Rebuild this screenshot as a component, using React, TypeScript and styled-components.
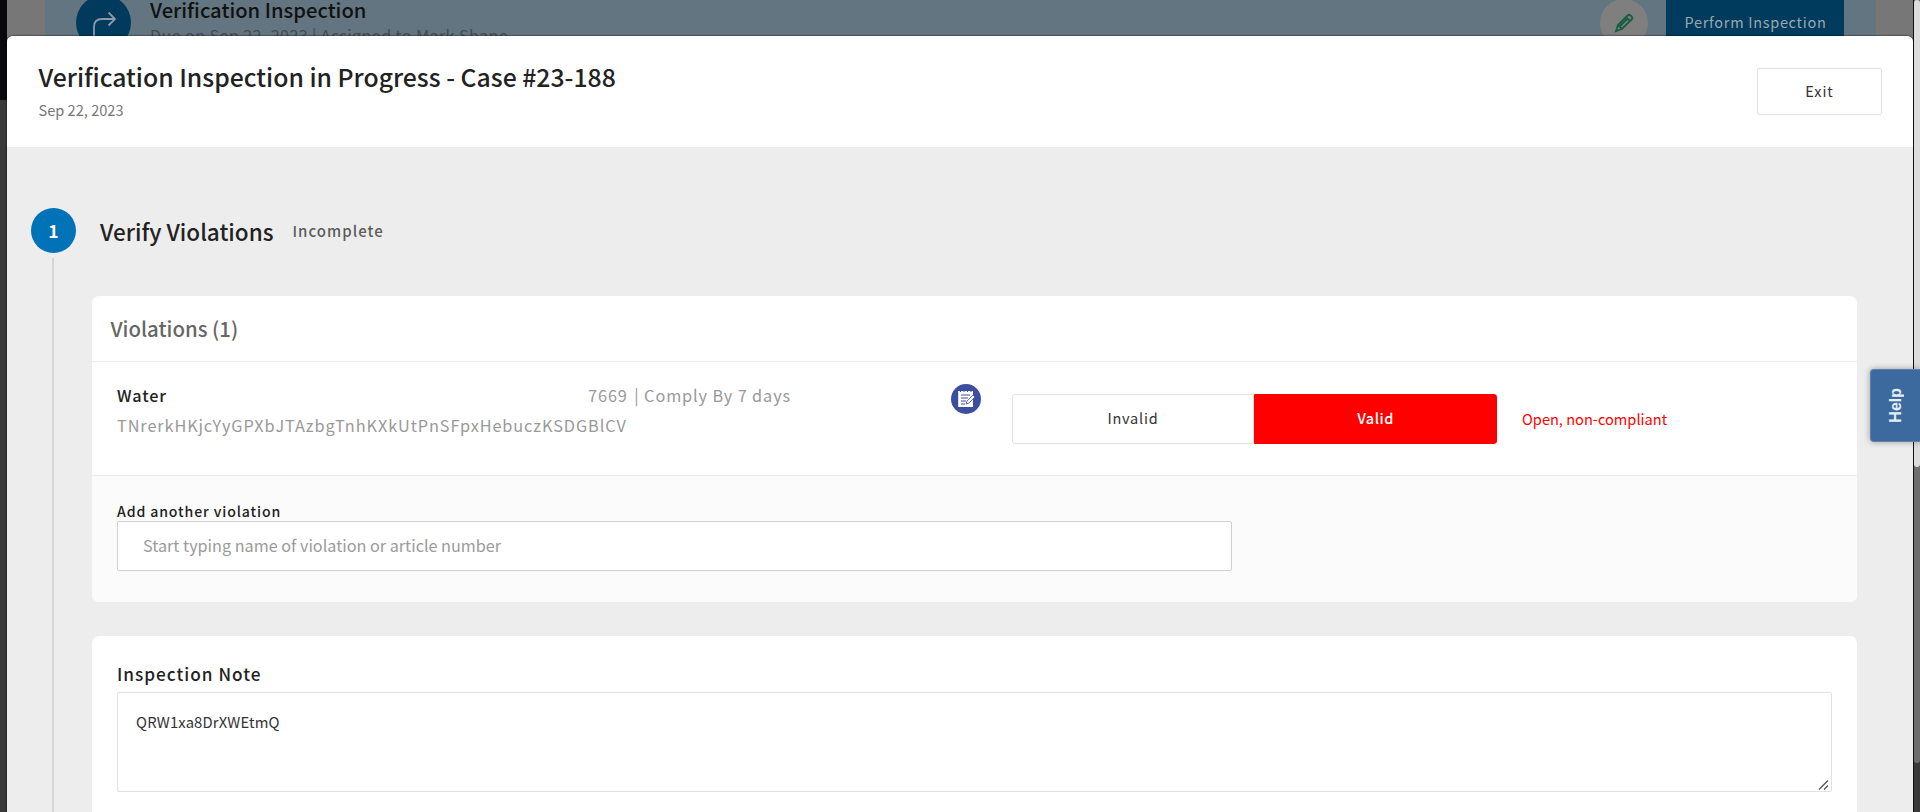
import React from "react";
import styled, { createGlobalStyle } from "styled-components";

const Global = createGlobalStyle`
  *, *::before, *::after { box-sizing: border-box; }
  html, body { margin: 0; background: #3a3a3a; overflow: hidden; }
  body { font-family: "Noto Sans CJK SC", sans-serif; color: #222; }
`;

const Screen = styled.div`
  position: relative;
  width: 1920px;
  height: 812px;
  overflow: hidden;
  background: #3a3a3a;
`;

const Backdrop = styled.div`
  display: flex;
  height: 100px;
  padding-left: 7px;
  background: #09090b;
`;

const Gutter = styled.div<{ $width: number }>`
  width: ${(p) => p.$width}px;
  background: #777;
`;

const Banner = styled.div`
  display: flex;
  align-items: flex-start;
  width: 1831px;
  padding: 0 32px 0 31px;
  background: #627581;
`;

const RouteBadge = styled.div`
  display: flex;
  align-items: center;
  justify-content: center;
  width: 55px;
  height: 55px;
  margin-top: -5px;
  border-radius: 50%;
  background: #003a5c;
`;

const BannerText = styled.div`
  flex: 1;
  margin-top: -2px;
  padding-left: 19px;
`;

const Line = styled.div<{
  $size: number;
  $height: number;
  $weight?: number;
  $color?: string;
  $spacing?: number;
}>`
  font-size: ${(p) => p.$size}px;
  line-height: ${(p) => p.$height}px;
  font-weight: ${(p) => p.$weight ?? 400};
  color: ${(p) => p.$color ?? "#222"};
  letter-spacing: ${(p) => p.$spacing ?? 0}px;
  white-space: nowrap;
`;

const EditBadge = styled.div`
  display: flex;
  align-items: center;
  justify-content: center;
  width: 48px;
  height: 48px;
  margin: -1px 18px 0 0;
  border-radius: 50%;
  background: #7f7f7f;
`;

const PerformButton = styled.div`
  width: 178px;
  height: 60px;
  padding-left: 1px;
  background: #003a5c;
  text-align: center;
`;

const Modal = styled.div`
  position: absolute;
  top: 36px;
  left: 7px;
  width: 1906px;
  height: 800px;
  border-radius: 6px 6px 0 0;
  background: #ededed;
  box-shadow: 0 0 2px #000;
  overflow: hidden;
`;

const ModalHeader = styled.header`
  display: flex;
  justify-content: space-between;
  height: 111px;
  padding: 25px 31px 0 31.5px;
  background: #fff;
`;

const ModalTitle = styled.div`
  margin-top: -2px;
`;

const ExitButton = styled.button`
  width: 125px;
  height: 47px;
  margin-top: 7px;
  padding: 0 0 2px;
  border: 1px solid #e2e2e2;
  border-radius: 2px;
  background: #fff;
  font: 400 14.5px "Noto Sans CJK SC", sans-serif;
  letter-spacing: 0.9px;
  color: #333;
`;

const Step = styled.section`
  display: grid;
  grid-template-columns: 85px 1765px;
  padding-top: 61px;
`;

const Rail = styled.div`
  display: flex;
  flex-direction: column;
  align-items: center;
  width: 45px;
  margin-left: 24px;
`;

const StepNumber = styled.div`
  width: 45px;
  height: 45px;
  border-radius: 50%;
  background: #0072b8;
  color: #fff;
  font-size: 17.5px;
  font-weight: 700;
  line-height: 46px;
  text-align: center;
`;

const RailLine = styled.div`
  width: 2px;
  height: 600px;
  margin: 5px 1px 0 0;
  background: #d5d5d5;
`;

const StepTitle = styled.div`
  display: flex;
  align-items: center;
  gap: 19px;
  height: 47px;
  padding: 0 0 1px 8px;
`;

const Card = styled.div`
  border-radius: 7px;
  background: #fff;
  overflow: hidden;
`;

const ViolationsCard = styled(Card)`
  margin-top: 41px;
  height: 306px;
`;

const CardHeading = styled.div`
  height: 66px;
  padding: 15px 18.5px;
  border-bottom: 1px solid #ededed;
`;

const ViolationRow = styled.div`
  display: flex;
  height: 114px;
  padding-left: 25px;
  border-bottom: 1px solid #ededed;
`;

const Summary = styled.div`
  width: 834px;
  padding-top: 18px;
`;

const SummaryTop = styled.div`
  display: flex;
  justify-content: space-between;
  width: 674px;
`;

const Code = styled.span`
  margin-right: 2px;
`;

const NoteIcon = styled.svg`
  width: 30px;
  height: 30px;
  margin-top: 22px;
  flex: none;
`;

const Toggle = styled.div`
  display: flex;
  margin: 32px 25px 0 31px;
`;

const ToggleButton = styled.button<{ $active?: boolean }>`
  width: ${(p) => (p.$active ? 243 : 242)}px;
  height: 50px;
  padding: 0 0 3px;
  border: 1px solid ${(p) => (p.$active ? "#f00" : "#e0e3e3")};
  border-radius: ${(p) => (p.$active ? "0 3px 3px 0" : "3px 0 0 3px")};
  background: ${(p) => (p.$active ? "#f00" : "#fff")};
  color: ${(p) => (p.$active ? "#fff" : "#333")};
  font: ${(p) => (p.$active ? 500 : 400)} 14.5px "Noto Sans CJK SC", sans-serif;
  letter-spacing: ${(p) => (p.$active ? 0.5 : 0.8)}px;
`;

const Status = styled.div`
  padding-top: 45px;
`;

const AddPanel = styled.div`
  height: 126px;
  padding: 25px 25px 0;
  background: #fbfbfb;
`;

const SearchInput = styled.input`
  display: block;
  width: 1115px;
  height: 50px;
  padding: 0 25px 2px;
  border: 1px solid #d0d0d0;
  border-radius: 2px;
  background: #fff;
  font: 400 16.2px "Noto Sans CJK SC", sans-serif;
  outline: none;
  &::placeholder { color: #9b9b9b; opacity: 1; }
`;

const NoteCard = styled(Card)`
  height: 240px;
  margin-top: 34px;
  padding: 24px 25px 0;
`;

const NoteField = styled.div`
  position: relative;
  width: 1715px;
  margin-top: 5px;
`;

const NoteInput = styled.textarea`
  display: block;
  width: 100%;
  height: 100px;
  padding: 17px 18px;
  border: 1px solid #e0e3e3;
  border-radius: 2px;
  font: 400 14.8px/24px "Noto Sans CJK SC", sans-serif;
  letter-spacing: 0.15px;
  color: #333;
  outline: none;
  resize: none;
`;

const Grip = styled.svg`
  position: absolute;
  right: 2px;
  bottom: 1px;
  width: 12px;
  height: 12px;
`;

const ScrollTrack = styled.div`
  position: absolute;
  top: 0;
  right: 0;
  width: 7px;
  height: 812px;
  background: #3a3a3a;
  border-left: 1px solid #111;
`;

const ScrollThumb = styled.div`
  height: 763px;
  background: #6e6e6e;
  border-radius: 0 0 3px 3px;
`;

const InnerThumb = styled.div`
  height: 467px;
  background: #dcdcdc;
  border-radius: 3px;
`;

const HelpTab = styled.div`
  position: absolute;
  top: 369px;
  right: 0;
  width: 50px;
  height: 73px;
  border: 1px solid #5d82ad;
  border-right: 0;
  border-radius: 4px 0 0 4px;
  background: #3c6a9f;
  box-shadow: 0 0 6px rgba(0, 0, 0, 0.35);
  color: #e6edf5;
  display: flex;
  align-items: center;
  justify-content: center;
`;

const HelpText = styled.span`
  writing-mode: vertical-rl;
  transform: rotate(180deg);
  font: 700 16px "Liberation Sans", sans-serif;
`;

export default function App() {
  return (
    <Screen>
      <Global />
      <Backdrop>
        <Gutter $width={38} />
        <Banner>
          <RouteBadge>
            <svg width="28" height="32" viewBox="0 0 28 32" fill="none" stroke="#8b9ba6" strokeWidth="1.8">
              <path d="M4 32V20Q4 12 12 12H24.500M18.500 5.500L25 12L18.500 18.500" />
            </svg>
          </RouteBadge>
          <BannerText>
            <Line $size={20.2} $height={24} $weight={500} $color="#111">Verification Inspection</Line>
            <Line $size={16.3} $height={27} $color="#454b50" $spacing={0.32}>Due on Sep 22, 2023 | Assigned to Mark Shane</Line>
          </BannerText>
          <EditBadge>
            <svg width="20" height="20" viewBox="0 0 20 20" fill="none" stroke="#155e43" strokeWidth="1.8">
              <path d="M2 18L4 12L14 2Q16 1 18 4Q19 6 17 7L8 16ZM12 4L16 8M6 13L13 6M4 12L8 16" />
            </svg>
          </EditBadge>
          <PerformButton>
            <Line $size={14.5} $height={44} $color="#9aa8b2" $spacing={0.7}>Perform Inspection</Line>
          </PerformButton>
        </Banner>
        <Gutter $width={37} />
      </Backdrop>

      <Modal>
        <ModalHeader>
          <ModalTitle>
            <Line $size={24.75} $height={34} $weight={500}>Verification Inspection in Progress - Case #23-188</Line>
            <Line $size={14.6} $height={34} $color="#777">Sep 22, 2023</Line>
          </ModalTitle>
          <ExitButton>Exit</ExitButton>
        </ModalHeader>
        <Step>
          <Rail>
            <StepNumber>1</StepNumber>
            <RailLine />
          </Rail>
          <div>
            <StepTitle>
              <Line $size={22.5} $height={34} $weight={500}>Verify Violations</Line>
              <Line $size={15} $height={24} $weight={500} $color="#5c5c5c" $spacing={1}>Incomplete</Line>
            </StepTitle>
            <ViolationsCard>
              <CardHeading>
                <Line $size={20.4} $height={34} $weight={500} $color="#666">Violations (1)</Line>
              </CardHeading>
              <ViolationRow>
                <Summary>
                  <SummaryTop>
                    <Line $size={16.3} $height={30} $weight={500} $spacing={0.9}>Water</Line>
                    <Line $size={16.3} $height={30} $color="#999" $spacing={0.88}>
                      <Code>7669</Code> | Comply By 7 days
                    </Line>
                  </SummaryTop>
                  <Line $size={16.3} $height={30} $color="#999" $spacing={0.91}>TNrerkHKjcYyGPXbJTAzbgTnhKXkUtPnSFpxHebuczKSDGBlCV</Line>
                </Summary>
                <NoteIcon viewBox="0 0 30 30">
                  <circle cx="15" cy="15" r="15" fill="#3b4ea0" />
                  <path d="M7.200 7H22V23H7.200Z" fill="#fff" />
                  <path d="M9.500 6V8M13 6V8M16.500 6V8M20 6V8M10 11H19M10 14H17M10 17H15M10 20H14" stroke="#3b4ea0" fill="none" />
                  <path d="M15 20L16 17L22 11L24 13L18 19Z" fill="#fff" stroke="#3b4ea0" strokeWidth=".8" />
                </NoteIcon>
                <Toggle>
                  <ToggleButton>Invalid</ToggleButton>
                  <ToggleButton $active>Valid</ToggleButton>
                </Toggle>
                <Status>
                  <Line $size={14.6} $height={24} $color="#f00">Open, non-compliant</Line>
                </Status>
              </ViolationRow>
              <AddPanel>
                <Line $size={14.1} $height={20} $weight={500} $spacing={0.88}>Add another violation</Line>
                <SearchInput placeholder="Start typing name of violation or article number" />
              </AddPanel>
            </ViolationsCard>
            <NoteCard>
              <Line $size={17.2} $height={27} $weight={500} $spacing={1}>Inspection Note</Line>
              <NoteField>
                <NoteInput defaultValue="QRW1xa8DrXWEtmQ" />
                <Grip viewBox="0 0 12 12" fill="none" stroke="#555" strokeWidth="1.3">
                  <path d="M1 10.500L10 1.500M6 10.500L10 6.500" />
                </Grip>
              </NoteField>
            </NoteCard>
          </div>
        </Step>
      </Modal>

      <ScrollTrack>
        <ScrollThumb>
          <InnerThumb />
        </ScrollThumb>
      </ScrollTrack>
      <HelpTab>
        <HelpText>Help</HelpText>
      </HelpTab>
    </Screen>
  );
}
